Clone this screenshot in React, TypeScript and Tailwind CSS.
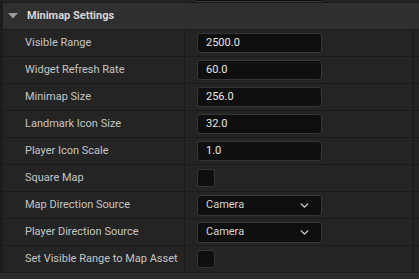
import { ChevronDown } from "lucide-react";

type Row =
  | { label: string; kind: "number"; value: string }
  | { label: string; kind: "check" }
  | { label: string; kind: "select"; value: string };

const rows: Row[] = [
  { label: "Visible Range", kind: "number", value: "2500.0" },
  { label: "Widget Refresh Rate", kind: "number", value: "60.0" },
  { label: "Minimap Size", kind: "number", value: "256.0" },
  { label: "Landmark Icon Size", kind: "number", value: "32.0" },
  { label: "Player Icon Scale", kind: "number", value: "1.0" },
  { label: "Square Map", kind: "check" },
  { label: "Map Direction Source", kind: "select", value: "Camera" },
  { label: "Player Direction Source", kind: "select", value: "Camera" },
  { label: "Set Visible Range to Map Asset", kind: "check" },
];

function Value({ row }: { row: Row }) {
  if (row.kind === "check") {
    return <div className="w-[18px] h-[18px] rounded-[3px] bg-[#0f0f0f] border border-[#363636]" />;
  }
  if (row.kind === "select") {
    return (
      <div className="w-[125px] h-[21px] rounded-[3px] bg-[#0f0f0f] border border-[#363636] flex items-center justify-between pl-[8px] pr-[10px] text-[#d4d4d4]">
        <span>{row.value}</span>
        <ChevronDown className="w-[13px] h-[13px] text-[#d4d4d4]" strokeWidth={2.5} />
      </div>
    );
  }
  return (
    <div className="w-[125px] h-[20px] rounded-[3px] bg-[#0f0f0f] border border-[#363636] flex items-center pl-[8px] text-[#e6e6e6]">
      {row.value}
    </div>
  );
}

export default function App() {
  return (
    <div className="w-[419px] h-[279px] overflow-hidden bg-[#242424] text-[11px] font-['Roboto',sans-serif] flex flex-col">
      {/* previous row tail */}
      <div className="h-[3px] flex shrink-0 border-b border-[#1a1a1a]">
        <div className="w-[3px] bg-[#1c1c1c]" />
        <div className="w-[182px] border-r border-[#1a1a1a]" />
        <div className="pl-[12px]">
          <div className="w-[125px] h-[2px] bg-[#0f0f0f] border-b border-[#363636]" />
        </div>
      </div>

      {/* Section header */}
      <div className="h-[27px] flex items-center shrink-0 bg-[#2f2f2f] border-b border-[#1a1a1a]">
        <div className="w-[3px] h-full bg-[#1c1c1c]" />
        <svg width="10" height="6" viewBox="0 0 10 6" className="ml-[5px] mr-[9px]">
          <polygon points="0,0 10,0 5,5.5" fill="#9a9a9a" />
        </svg>
        <span className="font-bold text-[#d6d6d6]">Minimap Settings</span>
      </div>

      {rows.map((row) => (
        <div key={row.label} className="h-[27px] flex shrink-0 border-b border-[#1a1a1a]">
          <div className="w-[3px] h-full bg-[#1c1c1c]" />
          <div className="w-[182px] flex items-center pl-[22px] text-[#c4c4c4] border-r border-[#1a1a1a] whitespace-nowrap">
            {row.label}
          </div>
          <div className="w-[229px] flex items-center pl-[12px] border-r border-[#1a1a1a]">
            <Value row={row} />
          </div>
        </div>
      ))}

      <div className="flex-1 bg-[#2a2a2a]" />
    </div>
  );
}
